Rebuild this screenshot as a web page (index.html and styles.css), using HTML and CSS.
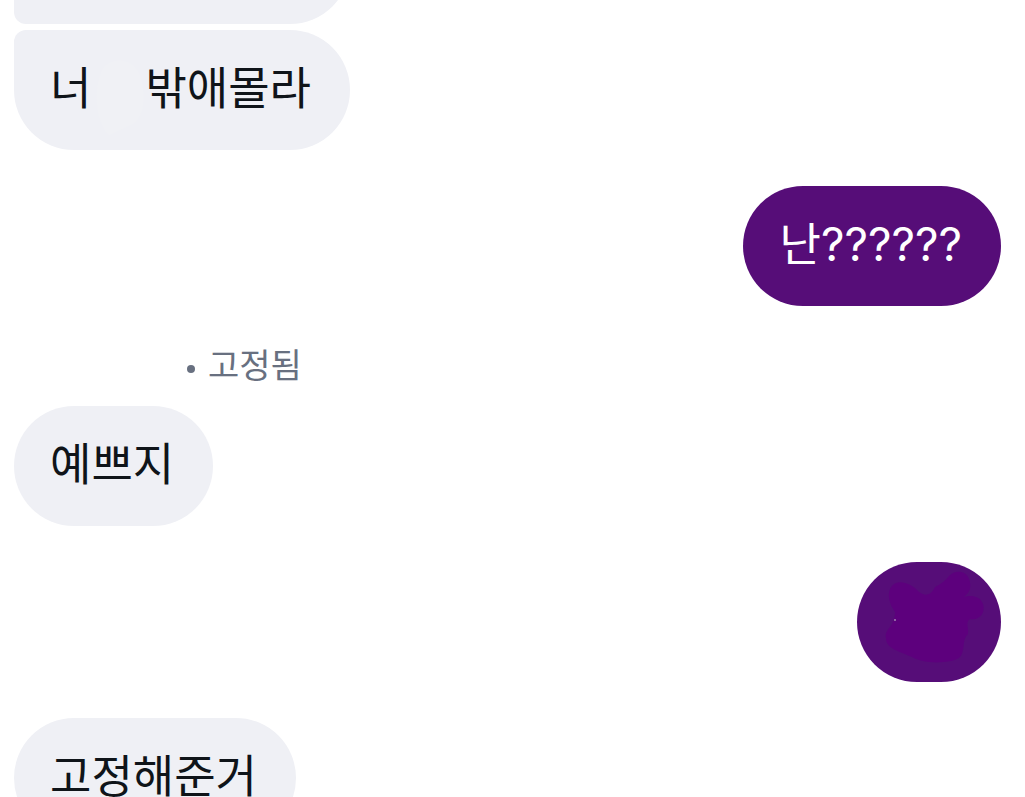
FILE: index.html
```html
<!DOCTYPE html>
<html lang="ko">
<head>
<meta charset="utf-8">
<meta name="viewport" content="width=device-width, initial-scale=1">
<title>Chat</title>
<link rel="stylesheet" href="styles.css">
</head>
<body>
<main class="chat">
  <div class="bubble received tail"></div>
  <div class="bubble received grouped"><span>너</span><svg class="smudge" viewBox="0 0 54 104" aria-hidden="true"><path d="M14 32C26 22 44 26 49 42C55 60 54 82 42 90L18 101C4 89 1 49 14 32Z"/></svg><span>밖애몰라</span></div>
  <div class="bubble sent"><span>난<span class="latin">??????</span></span></div>
  <p class="pinned"><span class="dot"></span>고정됨</p>
  <div class="bubble received">예쁘지</div>
  <div class="bubble sent scribbled"><svg class="scribble" viewBox="0 0 144 120" aria-label="메시지"><path d="M33 27C38 16 53 20 61 29C69 36 75 32 78 25C84 22 88 19 92 14C98 7 110 9 112 17C115 25 113 30 107 35C114 33 123 34 126 42C129 51 122 59 113 57C108 60 112 66 111 72C104 78 109 90 102 96C92 102 66 102 55 95C42 89 29 87 29 76C27 67 38 65 38 50C33 43 30 34 33 27Z"/><circle cx="38" cy="58" r="1"/></svg></div>
  <div class="bubble received">고정해준거</div>
</main>
</body>
</html>
```
FILE: styles.css
```css
* {
  box-sizing: border-box;
}

body {
  margin: 0;
  background: #fff;
  color: #0f1419;
  font-family: "Noto Sans CJK KR", sans-serif;
}

.chat {
  display: flex;
  flex-direction: column;
  align-items: flex-start;
  gap: 36px;
  height: 100vh;
  padding: 0 24px 0 14px;
  overflow: hidden;
}

.bubble {
  display: flex;
  flex-shrink: 0;
  align-items: center;
  min-height: 120px;
  padding: 24px 39px 32px 36px;
  border-radius: 60px;
  font-size: 45px;
  line-height: 64px;
}

.received {
  background: #eff0f5;
}

.sent {
  align-self: flex-end;
  background: #560d78;
  color: #fff;
}

.latin {
  font-family: Inter, sans-serif;
  font-size: 46px;
  line-height: 1;
}

.tail {
  width: 336px;
  margin: -96px 0 -30px;
  border-bottom-left-radius: 12px;
}

.grouped {
  border-top-left-radius: 12px;
}

.smudge {
  width: 54px;
  height: 104px;
  margin: -20px 0;
  fill: #f0f1f5;
}

.pinned {
  display: flex;
  flex-shrink: 0;
  align-items: center;
  gap: 13px;
  margin: -2px 0 -18px 173px;
  color: #687080;
  font-size: 34px;
  line-height: 48px;
}

.dot {
  width: 8px;
  height: 8px;
  margin-top: 10px;
  border-radius: 50%;
  background: currentColor;
}

.scribbled {
  padding: 0;
}

.scribble {
  width: 144px;
  height: 120px;
}

.scribble path {
  fill: #5d007d;
}

.scribble circle {
  fill: #a080b0;
}
```
